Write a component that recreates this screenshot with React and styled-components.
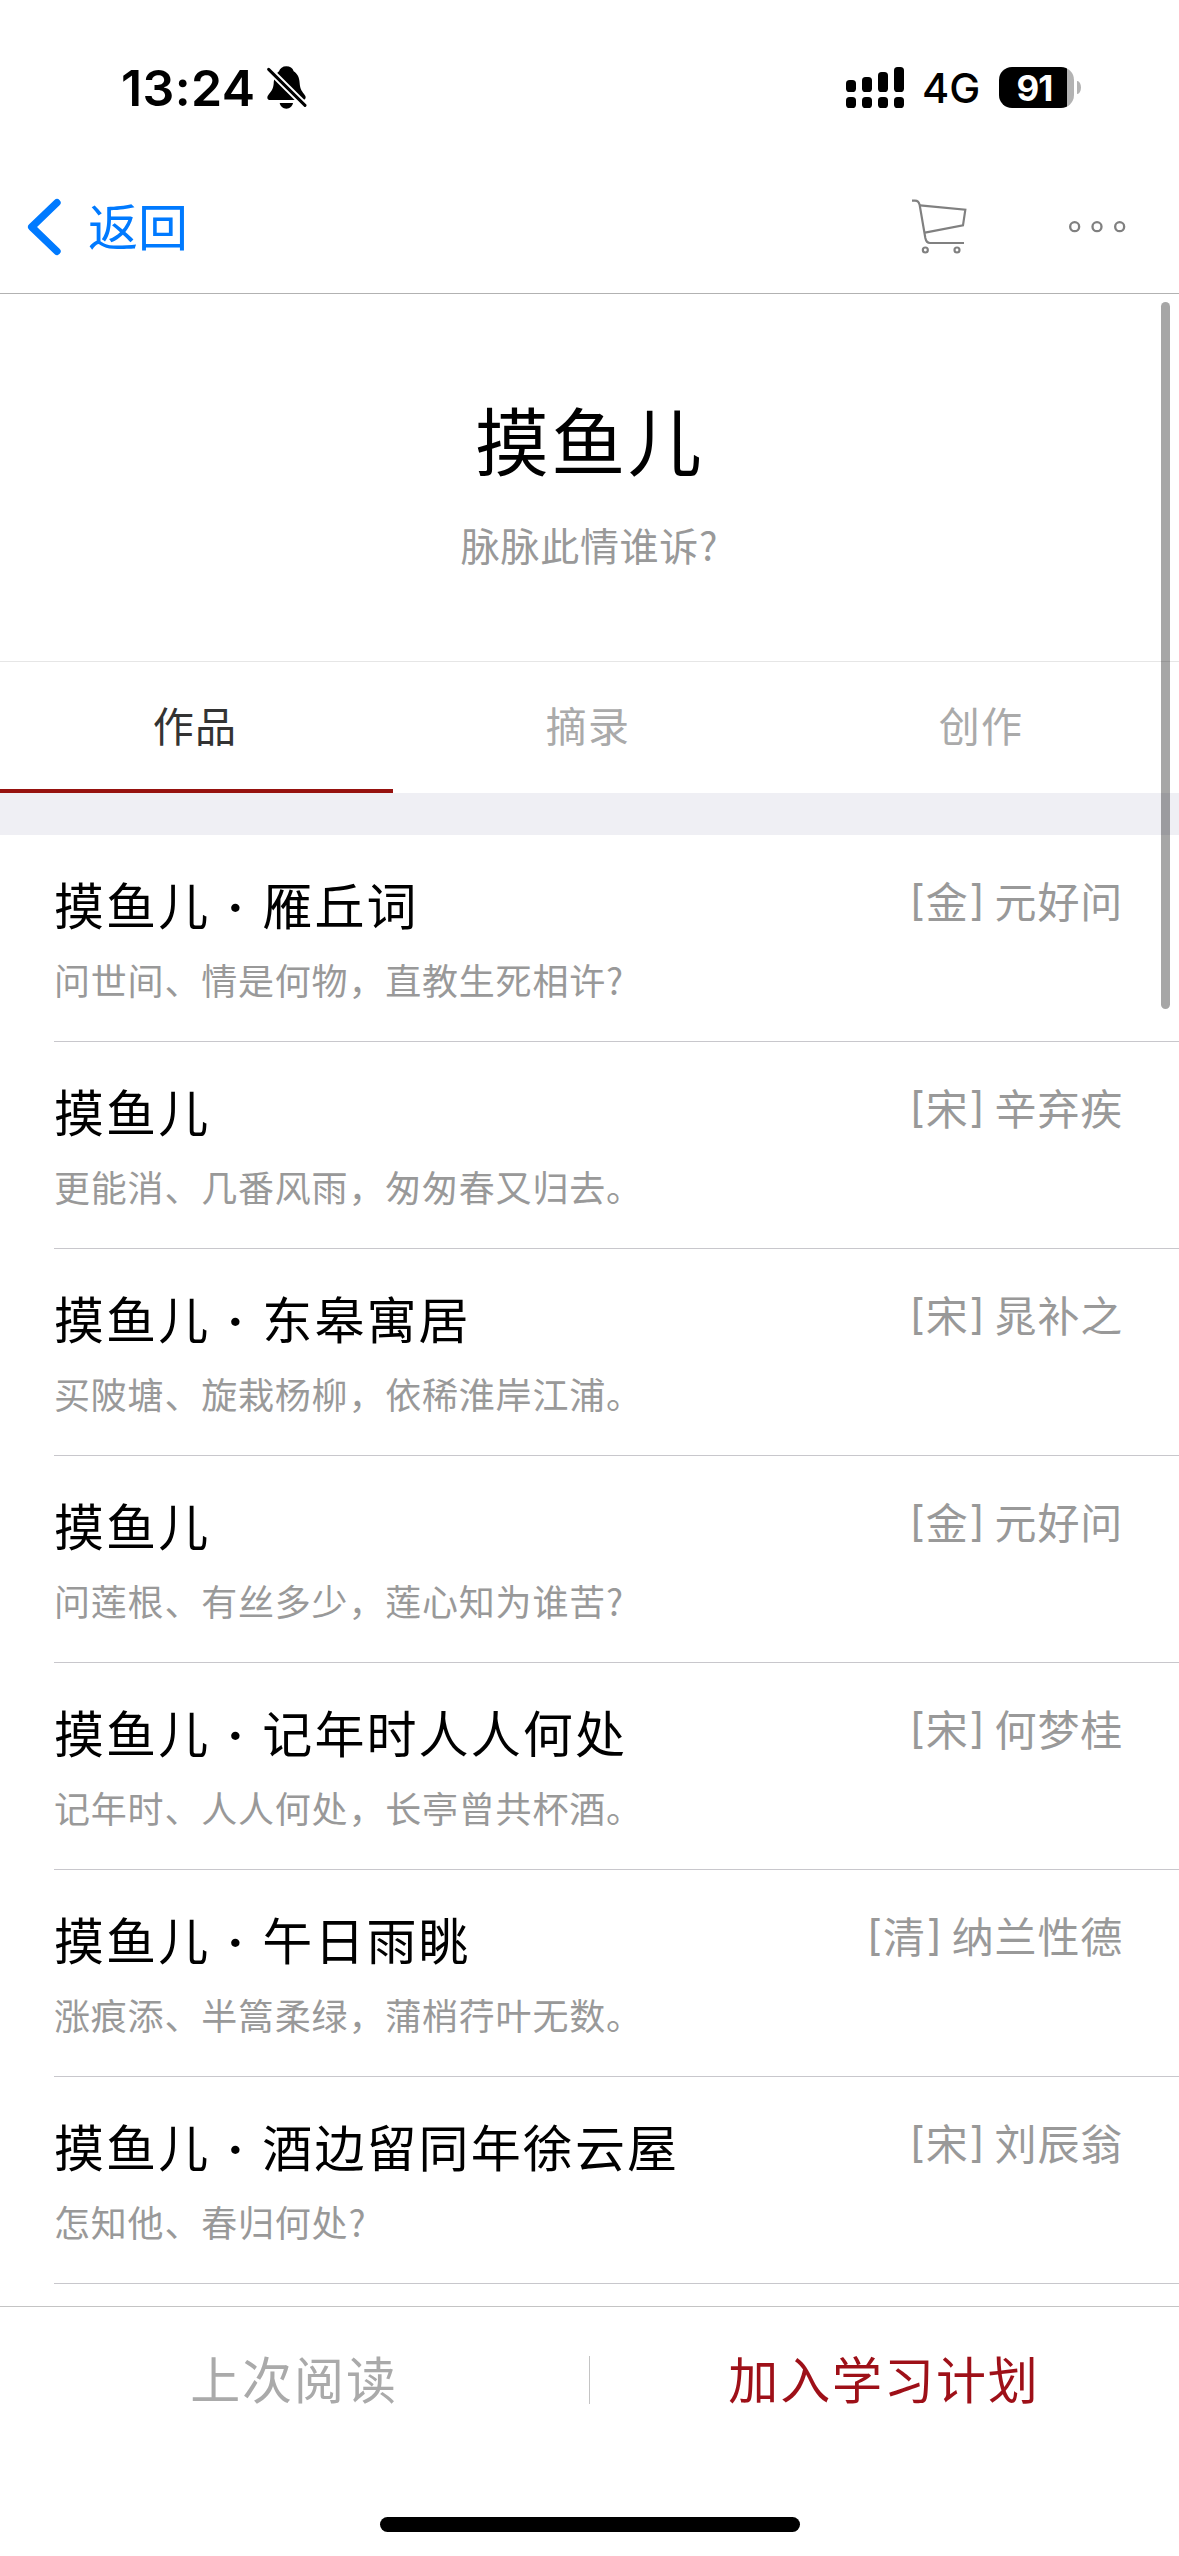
import React from "react";
import styled, { createGlobalStyle } from "styled-components";

const works = [
  { name: "雁丘词", line: "问世间、情是何物，直教生死相许?", dynasty: "金", author: "元好问" },
  { name: "", line: "更能消、几番风雨，匆匆春又归去。", dynasty: "宋", author: "辛弃疾" },
  { name: "东皋寓居", line: "买陂塘、旋栽杨柳，依稀淮岸江浦。", dynasty: "宋", author: "晁补之" },
  { name: "", line: "问莲根、有丝多少，莲心知为谁苦?", dynasty: "金", author: "元好问" },
  { name: "记年时人人何处", line: "记年时、人人何处，长亭曾共杯酒。", dynasty: "宋", author: "何梦桂" },
  { name: "午日雨眺", line: "涨痕添、半篙柔绿，蒲梢荇叶无数。", dynasty: "清", author: "纳兰性德" },
  { name: "酒边留同年徐云屋", line: "怎知他、春归何处?", dynasty: "宋", author: "刘辰翁" },
];

const tabs = ["作品", "摘录", "创作"];

function BellOff() {
  return (
    <svg width="40" height="44" viewBox="0 0 120 132">
      <path d="M58 1c-11 0-19 6-22 15C24 25 21 38 20 54C18 70 13 76 6 84C2 89 1 92 1 95c0 5 4 7 9 7h97c6 0 9-3 9-8c0-3-2-6-5-10c-8-10-12-17-13-32C97 34 92 24 80 16C77 6 69 1 58 1z" />
      <path d="M38 111h40c-2 10-10 17-20 17s-18-7-20-17z" />
      <path d="M-4 1L126 130" stroke="#fff" strokeWidth="21" />
      <path d="M5 10L114 118" stroke="#000" strokeWidth="9" strokeLinecap="round" />
    </svg>
  );
}

function Signal() {
  return (
    <svg width="58" height="41" viewBox="0 0 58 41">
      <rect x="0" y="13" width="10" height="12" rx="3.6" />
      <rect x="16" y="10" width="10" height="15" rx="3.6" />
      <rect x="32" y="5" width="10" height="20" rx="3.6" />
      <rect x="48" y="0" width="10" height="25" rx="3.6" />
      <rect x="0" y="30" width="10" height="11" rx="3.6" />
      <rect x="16" y="30" width="10" height="11" rx="3.6" />
      <rect x="32" y="30" width="10" height="11" rx="3.6" />
      <rect x="48" y="30" width="10" height="11" rx="3.6" />
    </svg>
  );
}

function Chevron() {
  return (
    <svg width="36" height="60" viewBox="0 0 108 180">
      <path
        d="M93 17L17 90L93 163"
        fill="none"
        stroke="#007aff"
        strokeWidth="22"
        strokeLinecap="round"
        strokeLinejoin="round"
      />
    </svg>
  );
}

function Cart() {
  return (
    <svg width="56" height="56" viewBox="0 0 168 168" fill="none" stroke="#808080" strokeWidth="6.5">
      <path d="M0 5H9Q20 5 23 18L40 117Q43 132 54 132H156" />
      <path d="M24 19L160 32L153 79L39 101" />
      <circle cx="40" cy="153" r="7.5" />
      <circle cx="135" cy="153" r="7.5" />
    </svg>
  );
}

function More() {
  return (
    <svg width="58" height="14" viewBox="0 0 174 42" fill="none" stroke="#808080" strokeWidth="7">
      <circle cx="20" cy="20" r="13.5" />
      <circle cx="87" cy="20" r="13.5" />
      <circle cx="155" cy="20" r="13.5" />
    </svg>
  );
}

function App() {
  return (
    <Page>
      <GlobalStyle />
      <StatusBar>
        <Time>13:24</Time>
        <BellOff />
        <StatusRight>
          <Signal />
          <Network>4G</Network>
          <Battery>
            <Level>91</Level>
          </Battery>
          <BatteryTip />
        </StatusRight>
      </StatusBar>
      <NavBar>
        <Back>
          <Chevron />
          <span>返回</span>
        </Back>
        <NavActions>
          <Cart />
          <More />
        </NavActions>
      </NavBar>
      <Content>
        <Hero>
          <h1>摸鱼儿</h1>
          <p>脉脉此情谁诉?</p>
        </Hero>
        <Tabs>
          {tabs.map((tab, i) => (
            <Tab key={tab} $active={i === 0}>
              {tab}
            </Tab>
          ))}
        </Tabs>
        <Gap />
        <List>
          {works.map((work, i) => (
            <Row key={i}>
              <Work>
                <Name>
                  摸鱼儿
                  {work.name && <Dot> · </Dot>}
                  {work.name}
                </Name>
                <Line>{work.line}</Line>
              </Work>
              <Author>
                <Bracket>[</Bracket>
                {work.dynasty}
                <Bracket>]</Bracket>
                <AuthorName>{work.author}</AuthorName>
              </Author>
            </Row>
          ))}
        </List>
        <ScrollBar />
      </Content>
      <BottomBar>
        <Action $color="#aaa">上次阅读</Action>
        <Divider />
        <Action $color="#9e1018">加入学习计划</Action>
      </BottomBar>
      <HomeArea>
        <HomeIndicator />
      </HomeArea>
    </Page>
  );
}

const GlobalStyle = createGlobalStyle`
  * {
    margin: 0;
    padding: 0;
    box-sizing: border-box;
  }

  body {
    background: #fff;
    font-family: "Noto Sans CJK SC", sans-serif;
  }

  svg {
    display: block;
    flex-shrink: 0;
  }
`;

const Page = styled.div`
  width: 1179px;
  height: 2556px;
  display: flex;
  flex-direction: column;
  overflow: hidden;
  background: #fff;
`;

const StatusBar = styled.div`
  height: 176px;
  display: flex;
  align-items: center;
  padding: 0 98px 1px 121px;
  font-family: Inter, sans-serif;
`;

const Time = styled.div`
  width: 146px;
  font-size: 50px;
  font-weight: 600;
  letter-spacing: 0.4px;
`;

const StatusRight = styled.div`
  margin-left: auto;
  display: flex;
  align-items: center;
`;

const Network = styled.div`
  width: 77px;
  margin-left: 18px;
  font-size: 41.5px;
  font-weight: 500;
`;

const Battery = styled.div`
  width: 75px;
  height: 41px;
  border-radius: 13px;
  background: linear-gradient(90deg, #000 68px, #b3b3b3 68px);
  display: flex;
  align-items: center;
`;

const Level = styled.div`
  width: 71px;
  text-align: center;
  color: #fff;
  font-size: 35px;
  font-weight: 700;
  letter-spacing: -1px;
`;

const BatteryTip = styled.div`
  width: 4px;
  height: 13px;
  margin-left: 3px;
  border-radius: 0 4px 4px 0 / 0 7px 7px 0;
  background: #b3b3b3;
`;

const NavBar = styled.div`
  height: 118px;
  display: flex;
  justify-content: space-between;
  padding: 0 53px 15px 26px;
  border-bottom: 1px solid #b2b2b2;
`;

const Back = styled.div`
  display: flex;
  align-items: center;
  color: #007aff;
  font-size: 50px;

  span {
    margin: -7px 0 0 26px;
  }
`;

const NavActions = styled.div`
  display: flex;
  align-items: center;
  gap: 100px;
`;

const Content = styled.div`
  position: relative;
  height: 2012px;
  overflow: hidden;
`;

const Hero = styled.div`
  height: 368px;
  padding-top: 98px;
  text-align: center;
  border-bottom: 1px solid #e6e6e6;

  h1 {
    font-size: 74px;
    font-weight: 400;
    line-height: 92px;
    letter-spacing: 2.4px;
  }

  p {
    margin-top: 30px;
    color: #999;
    font-size: 39px;
    line-height: 60px;
    letter-spacing: 0.7px;
  }
`;

const Tabs = styled.div`
  height: 131px;
  display: grid;
  grid-template-columns: repeat(3, 1fr);
`;

const Tab = styled.div`
  padding-right: 3px;
  text-align: center;
  font-size: 41px;
  line-height: 125px;
  letter-spacing: 1.2px;
  color: ${(props) => (props.$active ? "#333" : "#aaa")};
  border-bottom: 4px solid ${(props) => (props.$active ? "#96120f" : "transparent")};
`;

const Gap = styled.div`
  height: 42px;
  background: #efeff4;
`;

const List = styled.div`
  padding-left: 54px;
`;

const Row = styled.div`
  height: 207px;
  display: flex;
  justify-content: space-between;
  padding-right: 56px;
  border-bottom: 1px solid #c8c7cc;
`;

const Work = styled.div`
  padding-top: 32px;
`;

const Name = styled.div`
  font-size: 50px;
  line-height: 72px;
  letter-spacing: 2.1px;
`;

const Dot = styled.span`
  display: inline-block;
  width: 52px;
  font-family: Inter, sans-serif;
  font-weight: 700;
  line-height: 1;
  text-align: center;
`;

const Line = styled.div`
  margin-top: 12px;
  color: #999;
  font-size: 36px;
  line-height: 56px;
  letter-spacing: 0.8px;
`;

const Author = styled.div`
  display: flex;
  padding-top: 35px;
  color: #999;
  font-size: 42px;
  line-height: 60px;
  letter-spacing: 0.8px;
`;

const Bracket = styled.span`
  width: 17px;
  font-family: Inter, sans-serif;
  font-weight: 400;
  letter-spacing: 0;
  text-align: center;
`;

const AuthorName = styled.span`
  margin-left: 9px;
`;

const ScrollBar = styled.div`
  position: absolute;
  top: 8px;
  right: 9px;
  width: 9px;
  height: 707px;
  border-radius: 5px;
  background: rgba(0, 0, 0, 0.35);
`;

const BottomBar = styled.div`
  height: 148px;
  display: flex;
  align-items: center;
  border-top: 1px solid #c4c4c4;
`;

const Action = styled.div`
  flex: 1;
  padding: 0 1px 7px 0;
  text-align: center;
  font-size: 50px;
  letter-spacing: 1.9px;
  color: ${(props) => props.$color};
`;

const Divider = styled.div`
  width: 1px;
  height: 48px;
  margin-bottom: 1px;
  background: #c4c4c4;
`;

const HomeArea = styled.div`
  flex: 1;
  display: flex;
  justify-content: center;
  align-items: flex-end;
  padding-bottom: 24px;
`;

const HomeIndicator = styled.div`
  width: 420px;
  height: 15px;
  border-radius: 8px;
  background: #000;
`;

export default App;
